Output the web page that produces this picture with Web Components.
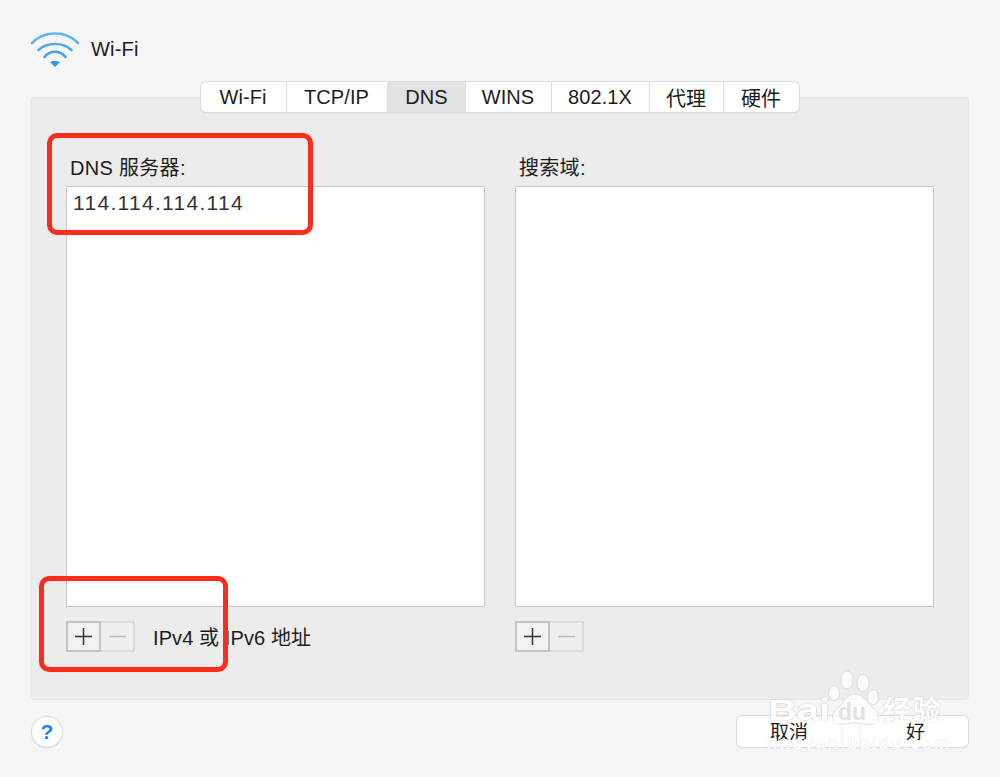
<!DOCTYPE html>
<html lang="zh">
<head>
<meta charset="utf-8">
<title>Wi-Fi DNS</title>
<style>
  html, body { margin: 0; height: 100%; }
  body {
    background: #f5f5f5;
    color: #1c1c1c;
    font-family: "Liberation Sans", "Noto Sans CJK SC", sans-serif;
    font-size: 20px;
    overflow: hidden;
  }
</style>
</head>
<body>
<prefs-sheet>
  <wifi-title slot="title">Wi-Fi</wifi-title>
  <tab-bar slot="tabs" tabs="Wi-Fi,TCP/IP,DNS,WINS,802.1X,代理,硬件" widths="86,101,78,86,98,74,75" current="DNS"></tab-bar>
  <list-box slot="left" label="DNS 服务器:" value="114.114.114.114">
    <span slot="extra">IPv4 或 IPv6 地址</span>
  </list-box>
  <list-box slot="right" label="搜索域:"></list-box>
  <sheet-footer slot="footer"></sheet-footer>
</prefs-sheet>
<red-mark style="left:47px;top:133px;width:266px;height:102px"></red-mark>
<red-mark style="left:39px;top:576px;width:189px;height:96px"></red-mark>
<baidu-mark></baidu-mark>

<script>
class PrefsSheet extends HTMLElement {
  constructor() {
    super();
    this.attachShadow({ mode: 'open' });
    this.shadowRoot.innerHTML = `
      <style>
        :host { display: block; padding: 32px 31px 0 30px; }
        .tabs { display: flex; justify-content: center; margin-top: 15px; height: 30px; position: relative; z-index: 1; }
        .panel {
          margin-top: -15px;
          height: 603px;
          box-sizing: border-box;
          background: #ececec;
          border-radius: 5px;
          box-shadow: inset 0 0 0 1px #e7e7e7;
          padding: 59px 35px 0 36px;
          display: grid;
          grid-template-columns: 419px 419px;
          column-gap: 30px;
        }
      </style>
      <slot name="title"></slot>
      <div class="tabs"><slot name="tabs"></slot></div>
      <div class="panel"><slot name="left"></slot><slot name="right"></slot></div>
      <slot name="footer"></slot>
    `;
  }
}

class WifiTitle extends HTMLElement {
  constructor() {
    super();
    this.attachShadow({ mode: 'open' });
    this.shadowRoot.innerHTML = `
      <style>
        :host { display: flex; align-items: center; gap: 11px; height: 35px; letter-spacing: .2px; }
      </style>
      <svg width="50" height="35" viewBox="0 0 50 35" fill="none" stroke-linecap="round">
        <path d="M2 11 C14 -1.700 36 -1.700 48 11" stroke="#62b4ee" stroke-width="2.600"/>
        <path d="M8.500 18 C17 10 33 10 41.500 18" stroke="#55abec" stroke-width="2.600"/>
        <path d="M14.500 25 C20 18 30 18 35.500 25" stroke="#45a2ea" stroke-width="2.600"/>
        <path d="M20 30 C23 28.500 27 28.500 30 30 L25 35 Z" fill="#2f97e8"/>
      </svg>
      <span><slot></slot></span>
    `;
  }
}

class TabBar extends HTMLElement {
  constructor() {
    super();
    this.attachShadow({ mode: 'open' });
  }
  connectedCallback() {
    const tabs = this.getAttribute('tabs').split(',');
    const widths = this.getAttribute('widths').split(',');
    const current = this.getAttribute('current');
    this.shadowRoot.innerHTML = `
      <style>
        :host { display: flex; height: 30px; border-radius: 5px; background: #fff; box-shadow: 0 0 0 1px #dcdcdc, 0 1px 1px #b5b5b5; overflow: hidden; }
        div { box-sizing: border-box; display: flex; align-items: center; justify-content: center; border-right: 1px solid #dedede; letter-spacing: .1px; }
        div:last-child { border-right: 0; }
        .on { background: #e2e2e2; border-right: 0; }
      </style>
      ${tabs.map((t, i) => `<div class="${t === current ? 'on' : ''}" style="width:${widths[i]}px">${t}</div>`).join('')}
    `;
  }
}

class ListBox extends HTMLElement {
  constructor() {
    super();
    this.attachShadow({ mode: 'open' });
  }
  connectedCallback() {
    const label = this.getAttribute('label');
    const value = this.getAttribute('value') || '';
    this.shadowRoot.innerHTML = `
      <style>
        :host { display: block; }
        .label { height: 30px; line-height: 24px; padding-left: 4px; letter-spacing: .3px; }
        .box {
          box-sizing: border-box; height: 421px; background: #fff;
          border: 1.500px solid #c9c9c9;
          padding: 4px 6px; font-size: 21px; line-height: 24px; letter-spacing: 1.300px; color: #333;
        }
        .tools { display: flex; align-items: center; margin-top: 14px; height: 31px; }
        .extra { margin-left: 18px; letter-spacing: .1px; }
      </style>
      <div class="label">${label}</div>
      <div class="box">${value}</div>
      <div class="tools">
        <step-buttons></step-buttons>
        <span class="extra"><slot name="extra"></slot></span>
      </div>
    `;
  }
}

class StepButtons extends HTMLElement {
  constructor() {
    super();
    this.attachShadow({ mode: 'open' });
    this.shadowRoot.innerHTML = `
      <style>
        :host { display: flex; height: 31px; }
        button { all: unset; box-sizing: border-box; width: 35px; height: 31px; display: flex; align-items: center; justify-content: center; background: #f2f2f2; border: 2px solid #c4c4c4; }
        button + button { background: #efefef; border: 2px solid #dcdcdc; border-left: 0; width: 34px; }
      </style>
      <button aria-label="add"><svg width="17" height="17" viewBox="0 0 17 17"><path d="M0 8.500H17M8.500 0V17" stroke="#333" stroke-width="1.500"/></svg></button>
      <button aria-label="remove"><svg width="17" height="17" viewBox="0 0 17 17"><path d="M0 8.500H17" stroke="#bdbdbd" stroke-width="1.500"/></svg></button>
    `;
  }
}

class SheetFooter extends HTMLElement {
  constructor() {
    super();
    this.attachShadow({ mode: 'open' });
    this.shadowRoot.innerHTML = `
      <style>
        :host { display: flex; justify-content: space-between; align-items: flex-start; padding-top: 16px; padding-left: 2px; }
        .help { box-sizing: border-box; width: 30px; height: 30px; margin-top: 1px; border-radius: 50%; background: #fff; box-shadow: 0 0 1px 1px #d8d8d8, 0 1px 1px #bbb; color: #1a82f7; font-size: 21px; font-weight: bold; display: flex; align-items: center; justify-content: center; }
        .btns { display: flex; width: 231px; height: 31px; margin-right: 1px; border-radius: 5px; background: #fff; box-shadow: 0 0 0 1px #dcdcdc, 0 1px 1px #b5b5b5; font-size: 19px; }
        .btns span { display: flex; align-items: center; justify-content: center; height: 29px; }
        .btns span:first-child { width: 104px; }
        .btns span:last-child { width: 19px; margin-left: 65px; }
      </style>
      <div class="help">?</div>
      <div class="btns"><span>取消</span><span>好</span></div>
    `;
  }
}

class RedMark extends HTMLElement {
  constructor() {
    super();
    this.attachShadow({ mode: 'open' });
    this.shadowRoot.innerHTML = `
      <style>
        :host { position: absolute; display: block; box-sizing: border-box; border: 5px solid #fb2c1c; border-radius: 10px; pointer-events: none; }
      </style>
    `;
  }
}

class BaiduMark extends HTMLElement {
  constructor() {
    super();
    this.attachShadow({ mode: 'open' });
    this.shadowRoot.innerHTML = `
      <style>
        :host { position: absolute; left: 768px; top: 668px; width: 180px; height: 100px; display: block; color: #fff; pointer-events: none; }
        .wm { position: absolute; font-weight: bold; text-shadow: 0 0 1px #bdbdbd, 0 0 1px #cfcfcf; white-space: nowrap; }
        .bai { left: 0; top: 25px; font-size: 30px; transform: scaleX(1.330); transform-origin: left; }
        .du { left: 70px; top: 31px; font-size: 23px; color: #e2e2e2; text-shadow: none; }
        .jy { left: 115px; top: 30px; font-size: 28px; line-height: 28px; letter-spacing: 1.500px; }
        .url { left: -1px; top: 65px; font-size: 18px; font-weight: normal; letter-spacing: 2.300px; text-shadow: 0 0 1px #d4d4d4; }
        svg { position: absolute; left: 60px; top: 0; }
      </style>
      <svg width="56" height="80" viewBox="0 0 56 80">
        <path d="M14 56V77M32 56V77" stroke="#ececec" fill="none"/>
        <g fill="#fff" fill-opacity=".8" stroke="#d6d6d6" stroke-width=".8">
          <ellipse cx="19" cy="12" rx="6" ry="9"/>
          <ellipse cx="35" cy="15" rx="6" ry="8.500"/>
          <ellipse cx="6" cy="25" rx="5.500" ry="7.500"/>
          <ellipse cx="45" cy="29" rx="5.500" ry="7.500"/>
          <path d="M27 26 C19 26 17 34 11 39 C3 45 2 55 11 56 C18 57 22 55 27 55 C33 55 38 57 44 56 C53 55 52 45 44 39 C38 34 35 26 27 26Z"/>
        </g>
      </svg>
      <span class="wm bai">Bai</span>
      <span class="wm du">du</span>
      <span class="wm jy">经验</span>
      <span class="wm url">jingyan.baidu.com</span>
    `;
  }
}

customElements.define('prefs-sheet', PrefsSheet);
customElements.define('wifi-title', WifiTitle);
customElements.define('tab-bar', TabBar);
customElements.define('list-box', ListBox);
customElements.define('step-buttons', StepButtons);
customElements.define('sheet-footer', SheetFooter);
customElements.define('red-mark', RedMark);
customElements.define('baidu-mark', BaiduMark);
</script>
</body>
</html>
